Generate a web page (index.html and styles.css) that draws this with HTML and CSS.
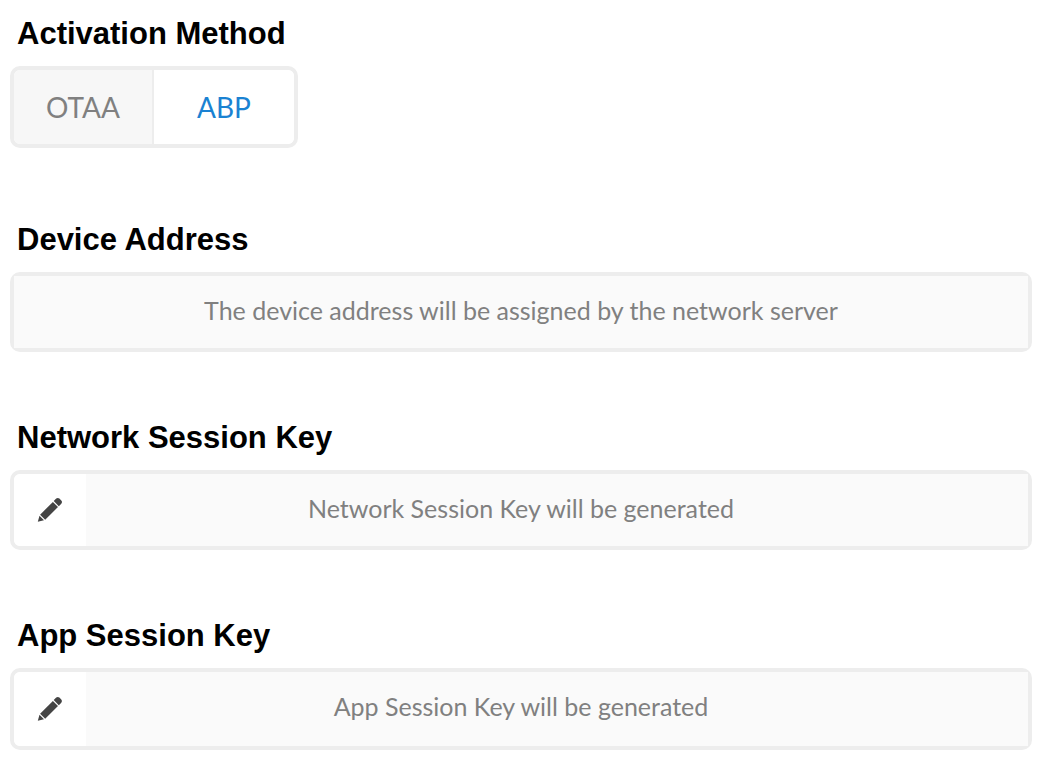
FILE: index.html
```html
<!DOCTYPE html>
<html lang="en">
<head>
<meta charset="utf-8">
<title>Activation Method</title>
<link rel="stylesheet" href="styles.css">
</head>
<body>
<form class="form">
  <section class="field field-method">
    <h2 class="label" id="method">Activation Method</h2>
    <div class="toggle" role="group" aria-labelledby="method">
      <button class="option" type="button" aria-pressed="false">OTAA</button>
      <button class="option option-active" type="button" aria-pressed="true">ABP</button>
    </div>
  </section>
  <section class="field">
    <label class="label" for="address">Device Address</label>
    <div class="box">
      <input class="input" id="address" type="text" readonly value="The device address will be assigned by the network server">
    </div>
  </section>
  <section class="field">
    <label class="label" for="network-key">Network Session Key</label>
    <div class="box">
      <button class="edit" type="button" aria-label="Edit network session key">
        <svg class="pencil" viewBox="0 0 26 26" aria-hidden="true"><path d="M.8 24.800L2.500 18.700L7 23.200zM3.100 17.700L15.900 4.900L21 10L8.200 22.800zM16.700 4.100L19.200 1.600Q20.800.200 22.400 1.600L24.300 3.500Q25.700 5 24.300 6.700L21.800 9.200z"/></svg>
      </button>
      <input class="input input-keyed" id="network-key" type="text" readonly value="Network Session Key will be generated">
    </div>
  </section>
  <section class="field">
    <label class="label" for="app-key">App Session Key</label>
    <div class="box">
      <button class="edit" type="button" aria-label="Edit app session key">
        <svg class="pencil" viewBox="0 0 26 26" aria-hidden="true"><path d="M.8 24.800L2.500 18.700L7 23.200zM3.100 17.700L15.900 4.900L21 10L8.200 22.800zM16.700 4.100L19.200 1.600Q20.800.200 22.400 1.600L24.300 3.500Q25.700 5 24.300 6.700L21.800 9.200z"/></svg>
      </button>
      <input class="input input-keyed input-last" id="app-key" type="text" readonly value="App Session Key will be generated">
    </div>
  </section>
</form>
</body>
</html>
```
FILE: styles.css
```css
* { box-sizing: border-box; }
body {
  margin: 0;
  background: #fff;
  font-family: Lato, sans-serif;
}
.form {
  display: flex;
  flex-direction: column;
  gap: 68px;
  padding: 16px 10px 12px;
}
.field {
  display: flex;
  flex-direction: column;
  align-items: flex-start;
  gap: 14px;
}
.field-method { padding-bottom: 6px; }
.label {
  margin: 0;
  padding-left: 7px;
  color: #000;
  font: bold 31px/36px "Liberation Sans", Arial, sans-serif;
}
.toggle, .box {
  display: flex;
  border: 4px solid #ededed;
  border-radius: 10px;
}
.toggle { overflow: hidden; }
.option {
  width: 138px;
  height: 74px;
  padding: 0;
  border: 0;
  background: #f7f7f7;
  color: #808080;
  font: 28px/34px Lato, sans-serif;
}
.option-active {
  width: 142px;
  border-left: 2px solid #ededed;
  background: #fff;
  color: #1a82d2;
}
.box { width: 100%; }
.input {
  flex: 1;
  min-width: 0;
  height: 72px;
  padding: 0 0 4px;
  border: 0;
  background: #fafafa;
  color: #808080;
  font: 25px/32px Lato, sans-serif;
  text-align: center;
}
.input-keyed { padding-right: 72px; }
.input-last {
  height: 74px;
  padding-bottom: 6px;
}
.edit {
  display: flex;
  align-items: center;
  justify-content: center;
  width: 72px;
  padding: 0;
  border: 0;
  border-radius: 6px 0 0 6px;
  background: #fff;
}
.pencil {
  width: 26px;
  height: 26px;
  fill: #444;
}
```
